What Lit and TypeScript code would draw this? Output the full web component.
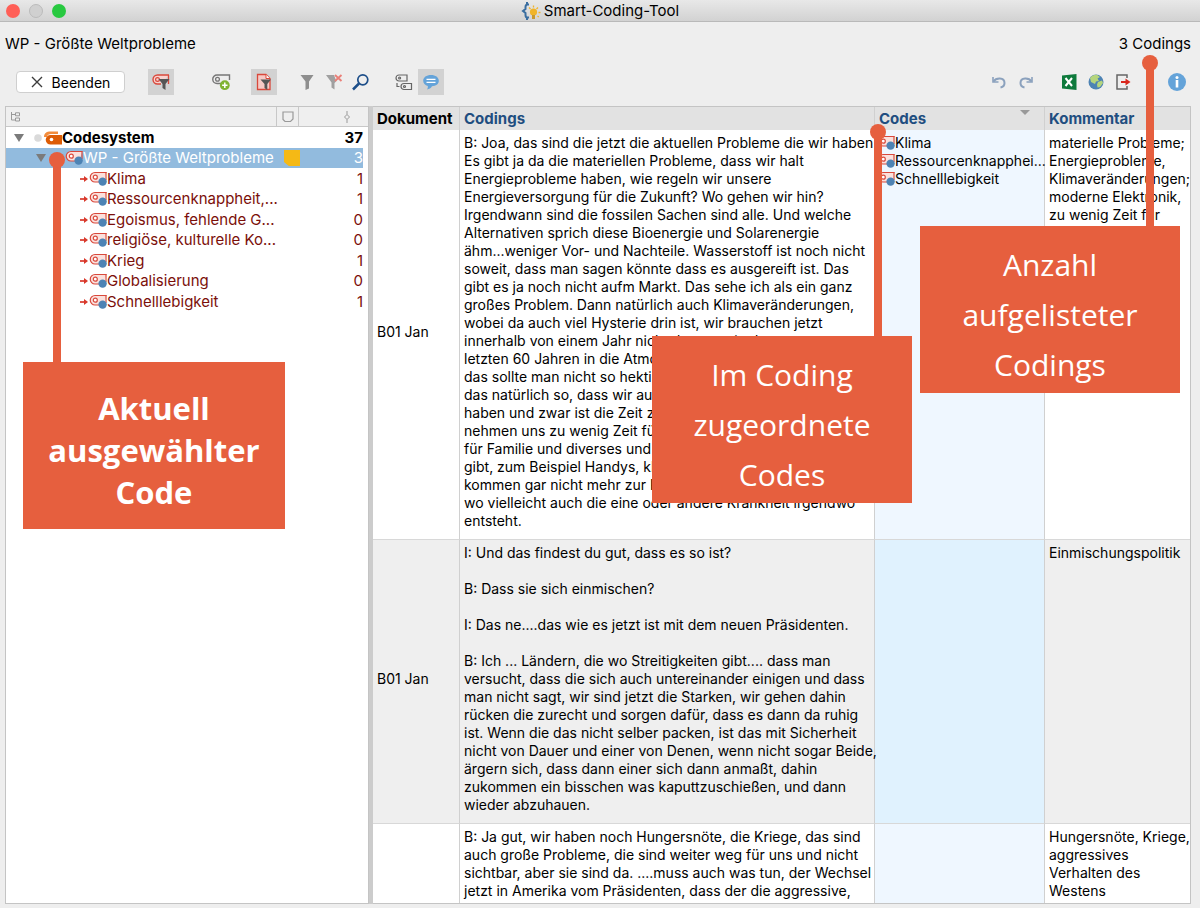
import { LitElement, html, svg, css, nothing } from "lit";
import { customElement, property } from "lit/decorators.js";
import { classMap } from "lit/directives/class-map.js";

const tagShape = svg`
  <path d="M17.500 1.500H6a4.700 4.700 0 0 0 0 9.500H14" fill="#fbe0dc" stroke="#d9483b" stroke-width="1.200"/>
  <path d="M17 1v8" stroke="#d9483b" stroke-width="1.200"/>
  <circle cx="6.300" cy="6.200" r="2" fill="#fff" stroke="#d9483b" stroke-width="1.200"/>
  <circle cx="13.600" cy="10.600" r="4.200" fill="#4d83b4"/>`;

const icons: Record<string, unknown> = {
  close: html`<svg width="12" height="12" viewBox="0 0 12 12"><path d="M1 1l10 10M11 1L1 11" stroke="#3c3c3c" stroke-width="1.4"/></svg>`,
  app: html`<svg width="20" height="18" viewBox="0 0 20 18">
    <path d="M8 2.500H6.500C5 2.500 4.500 3.500 4.500 5v2L2 9l2.500 2v2c0 1.500.5 2.500 2 2.500H8M6 0v3M6 15v3" fill="none" stroke="#3a6ea0" stroke-width="2"/>
    <circle cx="12.500" cy="10" r="3.600" fill="#f0b429"/><path d="M11 13h3v4h-3z" fill="#c9992e"/>
    <path d="M12.500 3.500v2M8 5.500L9.500 7M17 5.500L15.500 7M17.500 10.500h2M16.500 14l1.300 1" stroke="#f0b429" stroke-width="1.300"/></svg>`,
  tag: html`<svg width="18" height="16" viewBox="0 0 18 16">${tagShape}</svg>`,
  tagFilter: html`<svg width="20" height="18" viewBox="0 0 20 18">
    <path d="M18 2H6.500a4.500 4.500 0 0 0 0 9H10" fill="#f8d3cf" stroke="#d9483b" stroke-width="1.400"/>
    <path d="M17.500 2v9" stroke="#d9483b" stroke-width="1.300"/>
    <circle cx="6.500" cy="6.500" r="1.900" fill="none" stroke="#d9483b" stroke-width="1.200"/>
    <path d="M7.500 6h11l-4 5v6l-3-2v-4z" fill="#555"/></svg>`,
  tagAdd: html`<svg width="20" height="18" viewBox="0 0 20 18">
    <path d="M18.500 7V2H6a4 4 0 0 0 0 8.500h4" fill="none" stroke="#777" stroke-width="1.400"/>
    <circle cx="6.500" cy="6.300" r="1.900" fill="none" stroke="#777" stroke-width="1.300"/>
    <circle cx="13.800" cy="12.200" r="4.900" fill="#80b332"/><path d="M13.800 9.500v5.400M11.100 12.200h5.400" stroke="#fff" stroke-width="1.500"/></svg>`,
  docFilter: html`<svg width="18" height="18" viewBox="0 0 18 18">
    <path d="M2.500 1.500h8.500l4 4v11H2.500z" fill="#f6c9c5" stroke="#d9483b" stroke-width="1.300"/><path d="M11 1.500v4h4" fill="#fff" stroke="#d9483b"/>
    <path d="M5.500 6.500h10.500l-3.700 4.500v6l-2.800-2v-4z" fill="#555"/></svg>`,
  funnel: html`<svg width="16" height="18" viewBox="0 0 16 18"><path d="M1.500 2h13L10 8.500v7L6.500 17V8.500z" fill="#8e8e8e"/></svg>`,
  funnelOff: html`<svg width="18" height="18" viewBox="0 0 18 18"><path d="M1 2h8l2 5.500h1L9.500 10v6.500l-3-2V9.500z" fill="#a0a0a0"/><path d="M10 2l6.500 6M16.500 2L10 8" stroke="#ea8079" stroke-width="1.900"/></svg>`,
  search: html`<svg width="20" height="18" viewBox="0 0 20 18"><circle cx="11.800" cy="6.800" r="5" fill="none" stroke="#1d4e89" stroke-width="1.700"/><path d="M8 10.500L2 16.500" stroke="#1d4e89" stroke-width="2.500"/></svg>`,
  tagPair: html`<svg width="20" height="18" viewBox="0 0 20 18" fill="none" stroke="#666" stroke-width="1.200">
    <path d="M5 2h8v6H5a3 3 0 0 1 0-6z"/><circle cx="5.600" cy="5" r="1"/><path d="M10 10.500h7.500v6H10a3 3 0 0 1 0-6z"/><circle cx="10.500" cy="13.500" r="1"/><path d="M3 10v3.500h2.500"/></svg>`,
  bubble: html`<svg width="18" height="18" viewBox="0 0 18 18"><path d="M9 2c4.500 0 7.800 2.400 7.800 5.700S13.800 13 10 13.200C9 15 7 16 5 16.500c.8-1.200 1-2.400.8-3.600C3 12.200 1.200 10.300 1.200 7.700 1.200 4.400 4.500 2 9 2z" fill="#64a3d9"/><path d="M4.500 6.300h9M4.500 9.300h9" stroke="#fff" stroke-width="1.300"/></svg>`,
  undo: html`<svg width="16" height="16" viewBox="0 0 16 16" fill="none" stroke="#8ba1bd" stroke-width="2"><path d="M2 3v5h5.500" stroke-width="1.600"/><path d="M2.500 7.500C5 3.500 13.500 3 13.500 9c0 2.500-1.500 4-4 4.500"/></svg>`,
  redo: html`<svg width="16" height="16" viewBox="0 0 16 16" fill="none" stroke="#8ba1bd" stroke-width="2"><path d="M14 3v5H8.500" stroke-width="1.600"/><path d="M13.500 7.500C11 3.500 2.500 3 2.500 9c0 2.500 1.500 4 4 4.500"/></svg>`,
  sheet: html`<svg width="16" height="18" viewBox="0 0 16 18"><path d="M1 2.500L15.500 1v16L1 15.500z" fill="#0e7a3c"/><path d="M4.500 5l6.500 8M11 5l-6.500 8" stroke="#fff" stroke-width="2"/></svg>`,
  globe: html`<svg width="16" height="16" viewBox="0 0 16 16"><circle cx="8" cy="8" r="7.500" fill="#4d83b4"/><path d="M2 4C4 1 7 .5 9 .8L12 3 9.500 4.500 11 7 8 7.500 7 10 3 8zM10 8l4-1.500 1 2.500-3 4-2.500.5-.5-3z" fill="#b5d57c"/></svg>`,
  exit: html`<svg width="18" height="18" viewBox="0 0 18 18"><path d="M13 5V2H3v14h10v-3" fill="none" stroke="#666" stroke-width="1.500"/><path d="M7 9h6" stroke="#d8261c" stroke-width="2"/><path d="M11.500 5.500L16.500 9l-5 3.500z" fill="#d8261c"/></svg>`,
  info: html`<svg width="18" height="18" viewBox="0 0 18 18"><circle cx="9" cy="9" r="9" fill="#64a3d9"/><circle cx="9" cy="4.600" r="1.500" fill="#fff"/><rect x="7.700" y="7" width="2.600" height="7.500" fill="#fff"/></svg>`,
  tree: html`<svg width="10" height="10" viewBox="0 0 10 10" fill="none" stroke="#999"><path d="M.5 0v8h4M.5 2.500h4M4.500.8h4v3h-4zM4.500 6h4v3h-4z"/></svg>`,
  note: html`<svg width="12" height="12" viewBox="0 0 12 12"><path d="M1 1h10v7l-2.500 2.500H3L1 8.500z" fill="none" stroke="#999" stroke-width="1.200"/></svg>`,
  knob: html`<svg width="8" height="12" viewBox="0 0 8 12" fill="none" stroke="#999"><path d="M4 0v3.500M4 8.500V12M4 3.500L6.500 6 4 8.500 1.500 6z"/></svg>`,
  down: html`<svg width="12" height="10" viewBox="0 0 12 10"><path d="M1 1h10L6 9z" fill="#7b7b7b"/></svg>`,
  system: html`<svg width="28" height="16" viewBox="0 0 28 16"><circle cx="4" cy="8" r="3.800" fill="#dadada"/><path d="M24 1.500H15a5 5 0 0 0-5 5.500h3c0-2 2-3 4-3h7z" fill="#f28c3c"/><path d="M28 5H16.500a4.800 4.800 0 0 0 0 9.600H28z" fill="#dd5c05"/><circle cx="17.500" cy="9.500" r="1.800" fill="#fff"/></svg>`,
  arrow: html`<svg width="8" height="8" viewBox="0 0 8 8"><path d="M0 4h5" stroke="#d9382b" stroke-width="1.700"/><path d="M4 1l4 3-4 3z" fill="#d9382b"/></svg>`,
};

interface TreeRow { label: string; count: number; level: number; selected?: boolean }
const tree: TreeRow[] = [
  { label: "Codesystem", count: 37, level: 0 },
  { label: "WP - Größte Weltprobleme", count: 3, level: 1, selected: true },
  { label: "Klima", count: 1, level: 2 },
  { label: "Ressourcenknappheit,...", count: 1, level: 2 },
  { label: "Egoismus, fehlende G...", count: 0, level: 2 },
  { label: "religiöse, kulturelle Ko...", count: 0, level: 2 },
  { label: "Krieg", count: 1, level: 2 },
  { label: "Globalisierung", count: 0, level: 2 },
  { label: "Schnelllebigkeit", count: 1, level: 2 },
];

interface Coding { doc: string; text: string; codes: string[]; comment: string }
const codings: Coding[] = [
  {
    doc: "B01 Jan",
    text: `B: Joa, das sind die jetzt die aktuellen Probleme die wir haben.
Es gibt ja da die materiellen Probleme, dass wir halt
Energieprobleme haben, wie regeln wir unsere
Energieversorgung für die Zukunft? Wo gehen wir hin?
Irgendwann sind die fossilen Sachen sind alle. Und welche
Alternativen sprich diese Bioenergie und Solarenergie
ähm...weniger Vor- und Nachteile. Wasserstoff ist noch nicht
soweit, dass man sagen könnte dass es ausgereift ist. Das
gibt es ja noch nicht aufm Markt. Das sehe ich als ein ganz
großes Problem. Dann natürlich auch Klimaveränderungen,
wobei da auch viel Hysterie drin ist, wir brauchen jetzt
innerhalb von einem Jahr nicht das, was in den
letzten 60 Jahren in die Atmosphäre kam,
das sollte man nicht so hektisch sehen. Dann ist
das natürlich so, dass wir auch viel zu tun
haben und zwar ist die Zeit zu knapp, wir
nehmen uns zu wenig Zeit für uns,
für Familie und diverses und was es noch
gibt, zum Beispiel Handys, klar, wir
kommen gar nicht mehr zur Ruhe,
wo vielleicht auch die eine oder andere Krankheit irgendwo
entsteht.`,
    codes: ["Klima", "Ressourcenknapphei...", "Schnelllebigkeit"],
    comment: "materielle Probleme;\nEnergieprobleme,\nKlimaveränderungen;\nmoderne Elektronik,\nzu wenig Zeit für",
  },
  {
    doc: "B01 Jan",
    text: `I: Und das findest du gut, dass es so ist?

B: Dass sie sich einmischen?

I: Das ne....das wie es jetzt ist mit dem neuen Präsidenten.

B: Ich ... Ländern, die wo Streitigkeiten gibt.... dass man
versucht, dass die sich auch untereinander einigen und dass
man nicht sagt, wir sind jetzt die Starken, wir gehen dahin
rücken die zurecht und sorgen dafür, dass es dann da ruhig
ist. Wenn die das nicht selber packen, ist das mit Sicherheit
nicht von Dauer und einer von Denen, wenn nicht sogar Beide,
ärgern sich, dass dann einer sich dann anmaßt, dahin
zukommen ein bisschen was kaputtzuschießen, und dann
wieder abzuhauen.`,
    codes: [],
    comment: "Einmischungspolitik",
  },
  {
    doc: "",
    text: `B: Ja gut, wir haben noch Hungersnöte, die Kriege, das sind
auch große Probleme, die sind weiter weg für uns und nicht
sichtbar, aber sie sind da. ....muss auch was tun, der Wechsel
jetzt in Amerika vom Präsidenten, dass der die aggressive,`,
    codes: [],
    comment: "Hungersnöte, Kriege,\naggressives\nVerhalten des\nWestens",
  },
];

@customElement("tool-button")
class ToolButton extends LitElement {
  @property() icon = "";
  @property() label = "";
  @property({ type: Boolean }) active = false;
  static styles = css`
    :host { display: block; }
    button { display: flex; align-items: center; justify-content: center; width: 26px; height: 26px; padding: 0; border: 0; background: none; }
    .active { background: #d2d2d2; }
  `;
  render() {
    return html`<button class=${classMap({ active: this.active })} aria-label=${this.label} aria-pressed=${this.active}>${icons[this.icon]}</button>`;
  }
}

@customElement("code-tree")
class CodeTree extends LitElement {
  static styles = css`
    :host { display: block; background: #fff; border: 1px solid #c4c4c4; overflow: hidden; line-height: 20px; }
    table { width: 100%; border-spacing: 0; table-layout: fixed; }
    .memo { width: 22px; }
    .count { width: 70px; }
    th { height: 19px; padding: 0; background: #efefef; border-bottom: 1px solid #c8c8c8; line-height: 0; text-align: left; }
    th + th { border-left: 1px solid #c8c8c8; text-align: center; }
    th:first-child { padding-left: 5px; }
    th:last-child { padding-left: 26px; }
    td { height: 20px; padding: 0; color: #7b0f0a; white-space: nowrap; }
    tr:nth-child(odd) td { height: 21px; }
    .name { display: flex; align-items: center; height: 20px; }
    .name svg { flex: none; }
    .level0 { padding-left: 7px; }
    .level1 { padding-left: 29px; }
    .level2 { padding-left: 74px; }
    .level0 svg + svg { margin-left: 9px; }
    .level1 svg + svg { margin-left: 18px; }
    .level2 svg + svg { margin-left: 1px; }
    .num { text-align: right; border-right: 5px solid #fff; }
    .root td { color: #000; font-weight: 700; }
    .selected td { background: #92bbde; color: #fff; }
    .swatch { display: block; width: 16px; height: 16px; margin-left: 8px; background: #f5b915; clip-path: polygon(0 0, 100% 0, 100% 100%, 30% 100%, 0 75%); }
  `;
  render() {
    return html`<table>
      <colgroup><col /><col class="memo" /><col class="count" /></colgroup>
      <thead><tr><th aria-label="Code">${icons.tree}</th><th aria-label="Memo">${icons.note}</th><th aria-label="Anzahl">${icons.knob}</th></tr></thead>
      <tbody>${tree.map((r) => html`
        <tr class=${classMap({ root: r.level === 0, selected: !!r.selected })}>
          <td><div class="name level${r.level}">
            ${r.level < 2 ? icons.down : icons.arrow}${r.level ? icons.tag : icons.system}<span>${r.label}</span>
          </div></td>
          <td>${r.selected ? html`<span class="swatch"></span>` : nothing}</td>
          <td class="num">${r.count}</td>
        </tr>`)}</tbody>
    </table>`;
  }
}

@customElement("coding-table")
class CodingTable extends LitElement {
  static styles = css`
    :host { display: block; overflow: hidden; background: #fff; border: 1px solid #c4c4c4; border-left: 0; font-size: 14px; line-height: 18px; }
    table { width: 100%; border-spacing: 0; table-layout: fixed; }
    .doc { width: 86px; }
    .codes { width: 170px; }
    .comment { width: 146px; }
    th { height: 23px; padding: 0 0 0 4px; background: #e2e2e2; color: #1f4e80; font-size: 15px; text-align: left; }
    th:first-child { color: #000; }
    td { padding: 4px 0 9px 4px; border-bottom: 1px solid #d8d8d8; vertical-align: top; white-space: pre; }
    tr:last-child td { border-bottom: 0; }
    th + th, td + td { border-left: 1px solid #d0d0d0; }
    td:first-child { vertical-align: middle; }
    tr:nth-child(even) td { background: #efefef; }
    td.tags { padding-left: 2px; background: #eff7ff; }
    tr:nth-child(even) td.tags { background: #e0f2fe; }
    .head { display: flex; justify-content: space-between; align-items: flex-start; }
    .head svg { margin-right: 14px; }
    .code { display: flex; align-items: center; height: 18px; }
    .code svg { flex: none; }
  `;
  render() {
    return html`<table>
      <colgroup><col class="doc" /><col /><col class="codes" /><col class="comment" /></colgroup>
      <thead><tr><th>Dokument</th><th>Codings</th>
        <th><div class="head">Codes<svg width="10" height="6" viewBox="0 0 10 6"><path d="M0 0h10L5 5z" fill="#999" /></svg></div></th>
        <th>Kommentar</th></tr></thead>
      <tbody>${codings.map((c) => html`<tr><td>${c.doc}</td><td>${c.text}</td><td class="tags">${c.codes.map((k) => html`<div class="code">${icons.tag}<span>${k}</span></div>`)}</td><td>${c.comment}</td></tr>`)}</tbody>
    </table>`;
  }
}

@customElement("app-root")
class AppRoot extends LitElement {
  static styles = css`
    :host { display: flex; flex-direction: column; position: relative; box-sizing: border-box; height: 100vh; overflow: hidden; background: #eee; color: #000; font-family: Inter, "Liberation Sans", sans-serif; font-size: 15px; }
    .titlebar { display: grid; grid-template-columns: 1fr auto 1fr; align-items: center; height: 21px; padding: 0 6px; background: linear-gradient(#e8e8e8, #d2d2d2); border-bottom: 1px solid #b9b9b9; }
    .lights { display: flex; gap: 9px; }
    .light { box-sizing: border-box; width: 14px; height: 14px; padding: 0; border: 0; border-radius: 50%; }
    .red { background: #ff5f57; }
    .grey { background: #d0d0d0; border: 1px solid #bbb; }
    .green { background: #28c940; }
    .title { display: flex; align-items: center; gap: 3px; margin: 0; font-size: 15px; font-weight: 400; line-height: 20px; }
    .summary { display: flex; justify-content: space-between; padding: 12px 9px 0 5px; line-height: 20px; }
    .toolbar { display: flex; align-items: center; height: 26px; padding: 15px 10px 11px 16px; }
    .quit { display: flex; align-items: center; justify-content: center; gap: 9px; box-sizing: border-box; width: 109px; height: 22px; margin-right: 23px; padding: 0; border: 1px solid #cfcfcf; border-radius: 4px; background: #fff; font: inherit; font-size: 14px; color: inherit; }
    .groups, .group { display: flex; }
    .groups { gap: 17px; }
    .group { gap: 1px; }
    .first { margin-right: 17px; }
    .right { margin-left: auto; }
    .about { margin-left: 11px; }
    .panes { flex: 1; display: grid; grid-template-columns: 364px 1fr; min-height: 0; padding: 0 9px 4px 5px; gap: 4px; background: linear-gradient(#ccc, #ccc) 369px 0 / 4px calc(100% - 4px) no-repeat; }
    .callout { position: absolute; box-sizing: border-box; width: 260px; height: 167px; background: #e65f3e; color: #fff; font: 400 30px/50px "Open Sans", sans-serif; text-align: center; white-space: pre-line; }
    .callout p { margin: 0; padding-top: 14px; }
    .stem { position: absolute; width: 8px; background: #e65f3e; }
    .stem::before { content: ""; position: absolute; left: -4px; top: -8px; width: 16px; height: 16px; border-radius: 50%; background: #e65f3e; }
    .selected { left: 23px; top: 362px; width: 262px; font-weight: 700; font-size: 31px; line-height: 42px; }
    .selected p { padding-top: 25px; }
    .assigned { left: 652px; top: 336px; }
    .total { left: 920px; top: 226px; }
    .stem-selected { left: 53px; top: 160px; height: 202px; }
    .stem-assigned { left: 874px; top: 132px; height: 204px; }
    .stem-total { left: 1146px; top: 63px; height: 163px; }
  `;
  render() {
    const tool = (icon: string, label: string, active = false) => html`<tool-button .icon=${icon} .label=${label} ?active=${active}></tool-button>`;
    return html`
      <header class="titlebar">
        <div class="lights"><button class="light red" aria-label="Schließen"></button><button class="light grey" aria-label="Minimieren"></button><button class="light green" aria-label="Vergrößern"></button></div>
        <h1 class="title">${icons.app}Smart-Coding-Tool</h1>
      </header>
      <div class="summary"><span>WP - Größte Weltprobleme</span><span>3 Codings</span></div>
      <nav class="toolbar">
        <button class="quit">${icons.close}Beenden</button>
        <div class="groups">
          <div class="group first">${tool("tagFilter", "Codes filtern", true)}</div>
          <div class="group">${tool("tagAdd", "Neuer Code")}</div>
          <div class="group">${tool("docFilter", "Dokumente filtern", true)}</div>
          <div class="group">${tool("funnel", "Filter")}${tool("funnelOff", "Filter löschen")}${tool("search", "Suchen")}</div>
          <div class="group">${tool("tagPair", "Subcodes")}${tool("bubble", "Kommentare", true)}</div>
        </div>
        <div class="groups right">
          <div class="group">${tool("undo", "Rückgängig")}${tool("redo", "Wiederholen")}</div>
          <div class="group">${tool("sheet", "Excel")}${tool("globe", "Website")}${tool("exit", "Exportieren")}</div>
          <div class="group about">${tool("info", "Info")}</div>
        </div>
      </nav>
      <main class="panes"><code-tree></code-tree><coding-table></coding-table></main>
      <div class="stem stem-selected"></div><aside class="callout selected"><p>Aktuell
ausgewählter
Code</p></aside>
      <div class="stem stem-assigned"></div><aside class="callout assigned"><p>Im Coding
zugeordnete
Codes</p></aside>
      <div class="stem stem-total"></div><aside class="callout total"><p>Anzahl
aufgelisteter
Codings</p></aside>
    `;
  }
}
